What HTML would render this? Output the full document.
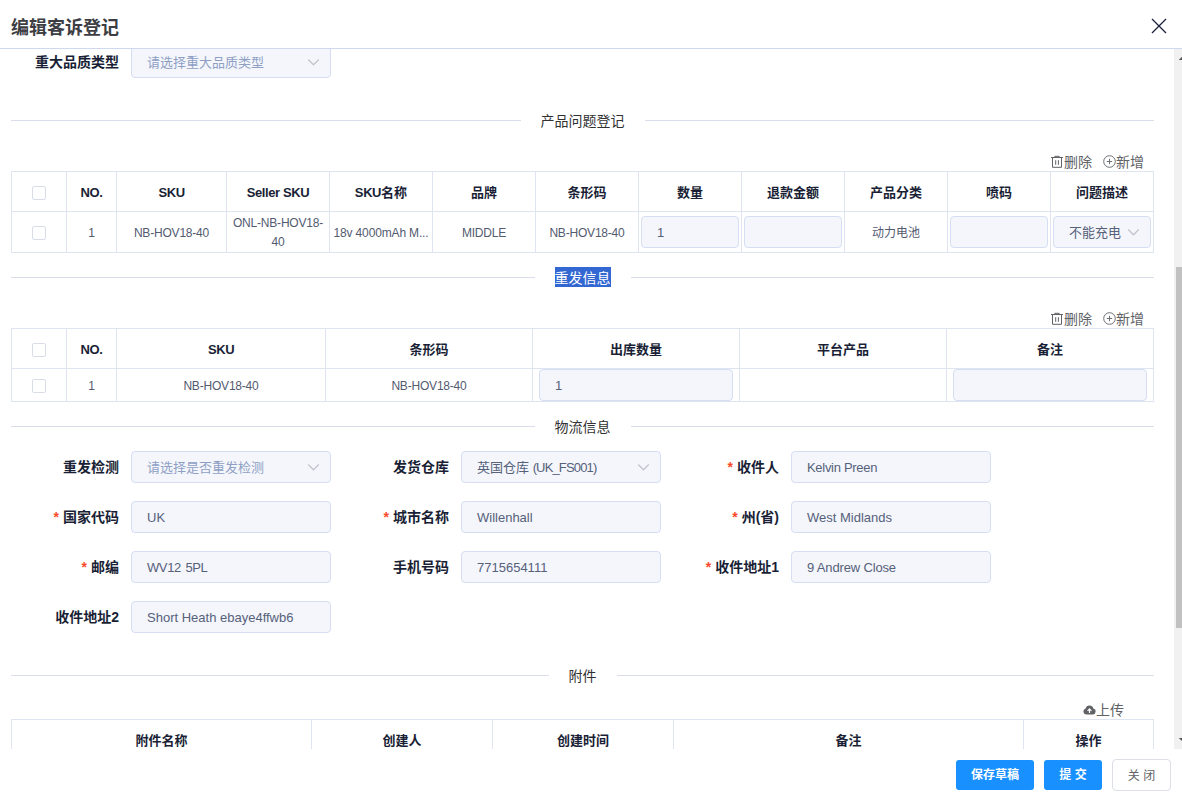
<!DOCTYPE html>
<html lang="zh-CN">
<head>
<meta charset="utf-8">
<title>编辑客诉登记</title>
<style>
*{box-sizing:border-box;margin:0;padding:0}
html,body{width:1182px;height:798px;overflow:hidden;background:#fff}
body{font-family:"Liberation Sans","Noto Sans CJK SC",sans-serif;font-size:14px;color:#1a1f36;position:relative}
.abs{position:absolute}
.hdr{left:0;top:0;width:1182px;height:49px;border-bottom:1px solid #cfd9ee;background:#fff;z-index:5}
.title{left:11px;top:14px;font-size:18px;font-weight:bold;line-height:28px;color:#3c3e44}
.close{left:1151px;top:18px;width:16px;height:16px}
.ftr{left:0;top:749px;width:1182px;height:49px;background:#fff;z-index:5}
.btn{position:absolute;top:11px;height:30px;border-radius:3px;font-size:12px;line-height:30px;text-align:center;font-weight:bold;color:#fff;background:#1890ff}
.btn.plain{top:10px;height:32px;background:#fff;border:1px solid #dcdfe6;color:#606266;font-weight:normal;line-height:30px;padding-top:1px;border-radius:4px}
.sb{left:1174px;top:49px;width:8px;height:700px;background:#f1f1f1;z-index:4}
.thumb{left:1176px;top:267px;width:6px;height:361px;background:#c1c1c1;z-index:4}
.lbl{position:absolute;width:120px;text-align:right;padding-right:12px;font-weight:bold;font-size:14px;line-height:32px;color:#1a1f36;white-space:nowrap}
.lbl i{font-style:normal;color:#fa4a2b;font-weight:bold;margin-right:4px}
.inp{position:absolute;width:200px;height:32px;background:#f4f6fc;border:1px solid #d5def2;border-radius:4px;font-size:13px;line-height:32px;padding:0 15px;color:#56617a;white-space:nowrap;overflow:hidden}
.inp.ph{color:#8f9fc4}
.chev{position:absolute;right:10px;top:12px;width:12px;height:7px}
.div{position:absolute;left:11px;width:1143px;height:1px;background:#dadeea}
.divt{position:absolute;font-size:14px;line-height:20px;color:#303133;background:#fff;padding:0 20px;white-space:nowrap;transform:translateX(-50%);left:582.5px}
.tool{position:absolute;font-size:14px;line-height:20px;color:#606266;white-space:nowrap}
table{position:absolute;left:11px;border-collapse:collapse;table-layout:fixed;font-size:12px;color:#535b70}
th,td{border:1px solid #dee4f0;text-align:center;vertical-align:middle;line-height:19px;padding:2px 0 0;overflow:hidden}
td.n{padding:0}
.l{letter-spacing:-0.4px}
td .l{letter-spacing:-0.2px}
th{font-size:13px;font-weight:bold;color:#1a1f36;height:40px}
th .cb{position:relative;top:-1px}
.cb{display:inline-block;width:14px;height:14px;border:1px solid #d9dde8;border-radius:2px;background:#fff;vertical-align:middle}
.ti{height:32px;background:#f4f6fc;border:1px solid #d5def2;border-radius:4px;text-align:left;line-height:32px;font-size:13px;padding:0 15px;color:#56617a;position:relative}
</style>
</head>
<body>
<div class="abs hdr"></div>
<div class="abs title" style="z-index:6">编辑客诉登记</div>
<svg class="abs close" style="z-index:6" viewBox="0 0 16 16"><path d="M1 1 L15 15 M15 1 L1 15" stroke="#1a1f3d" stroke-width="1.3" fill="none"/></svg>

<!-- content -->
<div id="content">
<div class="lbl" style="left:11px;top:46px">重大品质类型</div>
<div class="inp ph" style="left:131px;top:46px">请选择重大品质类型<svg class="chev" viewBox="0 0 12 7"><path d="M0.2 0.5 L5.5 5.8 L10.8 0.5" stroke="#c0c4cc" stroke-width="1.25" fill="none"/></svg></div>
<div class="div" style="top:120px"></div><div class="divt" style="top:111px">产品问题登记</div>
<div class="tool" style="right:38px;top:152px"><svg width="12" height="13" viewBox="0 0 12 13" style="vertical-align:-1px;margin-right:1px"><path d="M0 2.5 H12 M3.8 2.5 V1.3 H8.2 V2.5 M1.5 2.5 V12.3 H10.5 V2.5 M4.7 5.2 V9.8 M7.4 5.2 V9.8" stroke="#606266" stroke-width="1" fill="none"/></svg>删除<span style="display:inline-block;width:11px"></span><svg width="13" height="13" viewBox="0 0 13 13" style="vertical-align:-1px"><circle cx="6.5" cy="6.5" r="5.8" stroke="#6c6f75" stroke-width="1" fill="none"/><path d="M3.8 6.5 H9.2 M6.5 3.8 V9.2" stroke="#6c6f75" stroke-width="1" fill="none"/></svg>新增</div>
<table style="top:171px;width:1142px"><colgroup><col style="width:55px"><col style="width:50px"><col style="width:110px"><col style="width:103px"><col style="width:103px"><col style="width:103px"><col style="width:103px"><col style="width:103px"><col style="width:103px"><col style="width:103px"><col style="width:103px"><col style="width:103px"></colgroup><tr><th><span class="cb"></span></th><th><span class="l">NO.</span></th><th><span class="l">SKU</span></th><th><span class="l">Seller SKU</span></th><th><span class="l">SKU</span>名称</th><th>品牌</th><th>条形码</th><th>数量</th><th>退款金额</th><th>产品分类</th><th>喷码</th><th>问题描述</th></tr><tr style="height:41px"><td><span class="cb"></span></td><td>1</td><td><span class="l">NB-HOV18-40</span></td><td><span class="l">ONL-NB-HOV18-<br>40</span></td><td><span style="white-space:nowrap;letter-spacing:-0.15px">18v 4000mAh M...</span></td><td><span class="l">MIDDLE</span></td><td><span class="l">NB-HOV18-40</span></td><td class="n"><div class="ti" style="margin:0 2px">1</div></td><td class="n"><div class="ti" style="margin:0 2px"></div></td><td>动力电池</td><td class="n"><div class="ti" style="margin:0 2px"></div></td><td class="n"><div class="ti" style="margin:0 2px">不能充电<svg class="chev" viewBox="0 0 12 7"><path d="M0.2 0.5 L5.5 5.8 L10.8 0.5" stroke="#c0c4cc" stroke-width="1.25" fill="none"/></svg></div></td></tr></table>
<div class="div" style="top:277px"></div><div class="divt" style="top:268px"><span style="background:#3367d1;color:#fff;display:inline-block;line-height:20px;height:20px;position:relative;top:-1px;padding-top:1px">重发信息</span></div>
<div class="tool" style="right:38px;top:309px"><svg width="12" height="13" viewBox="0 0 12 13" style="vertical-align:-1px;margin-right:1px"><path d="M0 2.5 H12 M3.8 2.5 V1.3 H8.2 V2.5 M1.5 2.5 V12.3 H10.5 V2.5 M4.7 5.2 V9.8 M7.4 5.2 V9.8" stroke="#606266" stroke-width="1" fill="none"/></svg>删除<span style="display:inline-block;width:11px"></span><svg width="13" height="13" viewBox="0 0 13 13" style="vertical-align:-1px"><circle cx="6.5" cy="6.5" r="5.8" stroke="#6c6f75" stroke-width="1" fill="none"/><path d="M3.8 6.5 H9.2 M6.5 3.8 V9.2" stroke="#6c6f75" stroke-width="1" fill="none"/></svg>新增</div>
<table style="top:328px;width:1142px"><colgroup><col style="width:55px"><col style="width:50px"><col style="width:209px"><col style="width:207px"><col style="width:207px"><col style="width:207px"><col style="width:207px"></colgroup><tr><th><span class="cb"></span></th><th><span class="l">NO.</span></th><th><span class="l">SKU</span></th><th>条形码</th><th>出库数量</th><th>平台产品</th><th>备注</th></tr><tr style="height:33px"><td><span class="cb"></span></td><td>1</td><td><span class="l">NB-HOV18-40</span></td><td><span class="l">NB-HOV18-40</span></td><td class="n"><div class="ti" style="margin:0 6px">1</div></td><td></td><td class="n"><div class="ti" style="margin:0 6px"></div></td></tr></table>
<div class="div" style="top:426px"></div><div class="divt" style="top:417px">物流信息</div>
<div class="lbl" style="left:11px;top:451px">重发检测</div>
<div class="inp ph" style="left:131px;top:451px">请选择是否重发检测<svg class="chev" viewBox="0 0 12 7"><path d="M0.2 0.5 L5.5 5.8 L10.8 0.5" stroke="#c0c4cc" stroke-width="1.25" fill="none"/></svg></div>
<div class="lbl" style="left:341px;top:451px">发货仓库</div>
<div class="inp" style="left:461px;top:451px">英国仓库 <span style="letter-spacing:-0.85px">(UK_FS001)</span><svg class="chev" viewBox="0 0 12 7"><path d="M0.2 0.5 L5.5 5.8 L10.8 0.5" stroke="#c0c4cc" stroke-width="1.25" fill="none"/></svg></div>
<div class="lbl" style="left:671px;top:451px"><i>*</i>收件人</div>
<div class="inp" style="left:791px;top:451px"><span style="letter-spacing:-0.3px">Kelvin Preen</span></div>
<div class="lbl" style="left:11px;top:501px"><i>*</i>国家代码</div>
<div class="inp" style="left:131px;top:501px">UK</div>
<div class="lbl" style="left:341px;top:501px"><i>*</i>城市名称</div>
<div class="inp" style="left:461px;top:501px">Willenhall</div>
<div class="lbl" style="left:671px;top:501px"><i>*</i>州(省)</div>
<div class="inp" style="left:791px;top:501px">West Midlands</div>
<div class="lbl" style="left:11px;top:551px"><i>*</i>邮编</div>
<div class="inp" style="left:131px;top:551px"><span style="letter-spacing:-0.4px;word-spacing:1.5px">WV12 5PL</span></div>
<div class="lbl" style="left:341px;top:551px">手机号码</div>
<div class="inp" style="left:461px;top:551px">7715654111</div>
<div class="lbl" style="left:671px;top:551px"><i>*</i>收件地址1</div>
<div class="inp" style="left:791px;top:551px"><span style="letter-spacing:-0.15px">9 Andrew Close</span></div>
<div class="lbl" style="left:11px;top:601px">收件地址2</div>
<div class="inp" style="left:131px;top:601px">Short Heath ebaye4ffwb6</div>
<div class="div" style="top:675px"></div><div class="divt" style="top:666px">附件</div>
<div class="tool" style="right:58px;top:700px"><svg width="13" height="11" viewBox="0 0 13 11" style="vertical-align:0px"><path d="M3.2 10.5 A3 3 0 0 1 2.6 4.6 A4 4 0 0 1 10.3 4.4 A3.1 3.1 0 0 1 9.9 10.5 Z" fill="#606266"/><path d="M6.5 9 V5.2 M4.6 6.8 L6.5 4.9 L8.4 6.8" stroke="#fff" stroke-width="1.2" fill="none"/></svg>上传</div>
<table style="top:719px;width:1142px"><colgroup><col style="width:300px"><col style="width:181px"><col style="width:181px"><col style="width:350px"><col style="width:130px"></colgroup><tr><th>附件名称</th><th>创建人</th><th>创建时间</th><th>备注</th><th>操作</th></tr></table>
</div>

<div class="abs sb"></div>
<div class="abs thumb"></div>
<svg class="abs" style="left:1174px;top:49px;z-index:4;overflow:hidden" width="8" height="700" viewBox="0 0 8 700"><path d="M4.8 11 L8.5 7.3 L12.2 11 Z M4.8 688.9 L8.5 692.6 L12.2 688.9 Z" fill="#505050"/></svg>
<div class="abs ftr">
  <div class="btn" style="left:956px;width:78px">保存草稿</div>
  <div class="btn" style="left:1044px;width:58px">提 交</div>
  <div class="btn plain" style="left:1112px;width:59px">关 闭</div>
</div>
</body>
</html>
